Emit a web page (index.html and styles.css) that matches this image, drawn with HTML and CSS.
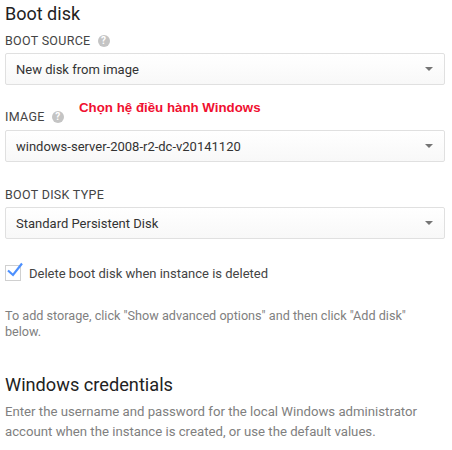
FILE: index.html
```html
<!DOCTYPE html>
<html lang="vi">
<head>
    <meta charset="UTF-8">
    <title>Boot disk</title>
    <link rel="stylesheet" href="styles.css">
</head>
<body>
    <div class="panel">
        <h2 class="title">Boot disk</h2>

        <div class="label label-source">BOOT SOURCE <span class="help">?</span></div>
        <div class="select">
            <span>New disk from image</span>
            <span class="arrow"></span>
        </div>

        <div class="label label-image">IMAGE <span class="help">?</span></div>
        <div class="select">
            <span>windows-server-2008-r2-dc-v20141120</span>
            <span class="arrow"></span>
        </div>

        <div class="label label-type">BOOT DISK TYPE</div>
        <div class="select">
            <span>Standard Persistent Disk</span>
            <span class="arrow"></span>
        </div>

        <div class="check-row">
            <span class="checkbox">
                <svg width="20" height="20" viewBox="0 0 20 20">
                    <path d="M3 9.5 L8 14 L17 2.5" fill="none" stroke="#4d90fe" stroke-width="2.2"/>
                </svg>
            </span>
            <span>Delete boot disk when instance is deleted</span>
        </div>

        <p class="note">To add storage, click "Show advanced options" and then click "Add disk" below.</p>

        <h2 class="title title-win">Windows credentials</h2>
        <p class="desc">Enter the username and password for the local Windows administrator account when the instance is created, or use the default values.</p>

        <!-- chu thich do tren anh -->
        <div class="annotation">Chọn hệ điều hành Windows</div>
    </div>
</body>
</html>
```

FILE: styles.css
```css
body {
    margin: 0;
    background: #fff;
    color: #222;
    font-family: Roboto, "Liberation Sans", sans-serif;
    font-size: 13px;
}

.panel {
    position: relative;
    width: 440px;
    height: 450px;
    padding: 0 0 0 5px;
    overflow: hidden;
}

.title {
    margin: 0;
    font-size: 18px;
    font-weight: 400;
    line-height: 24px;
    padding-top: 2px;
    color: #222;
}

.label {
    color: #444;
    font-size: 12.5px;
    letter-spacing: 0.3px;
    line-height: 16px;
    display: flex;
    align-items: center;
    gap: 7px;
}

.label-source { margin-top: 7px; margin-bottom: 4px; }
.label-image { margin-top: 24px; margin-bottom: 5px; }
.label-type { margin-top: 25px; margin-bottom: 4px; }

.help {
    display: inline-block;
    width: 12px;
    height: 12px;
    border-radius: 50%;
    background: #c4c4c4;
    color: #fff;
    font-size: 10px;
    font-weight: 700;
    line-height: 12px;
    text-align: center;
    letter-spacing: 0;
}

.select {
    box-sizing: border-box;
    height: 32px;
    display: flex;
    align-items: center;
    justify-content: space-between;
    padding: 0 11px 0 10px;
    border: 1px solid #e0e0e0;
    border-radius: 2px;
    background: linear-gradient(#fff, #f8f8f8);
    color: #333;
    font-size: 13px;
}

.arrow {
    width: 0;
    height: 0;
    border-left: 4px solid transparent;
    border-right: 4px solid transparent;
    border-top: 4px solid #757575;
}

.check-row {
    display: flex;
    align-items: center;
    gap: 8px;
    margin-top: 26px;
    color: #444;
    font-size: 13px;
}

.checkbox {
    box-sizing: border-box;
    width: 16px;
    height: 16px;
    border: 1px solid #d0d0d0;
    position: relative;
}

.checkbox svg {
    position: absolute;
    left: -1px;
    top: -5px;
}

.note {
    margin: 27px 0 0;
    color: #808080;
    font-size: 12.65px;
    line-height: 16px;
}

.title-win {
    margin-top: 31px;
    font-size: 18.2px;
}

.desc {
    margin: 5px 0 0;
    color: #808080;
    font-size: 13.2px;
    line-height: 20px;
}

.annotation {
    position: absolute;
    left: 79px;
    top: 100px;
    color: #f01030;
    font-family: "Liberation Sans", sans-serif;
    font-size: 13.3px;
    font-weight: 700;
    line-height: 15px;
}
```
